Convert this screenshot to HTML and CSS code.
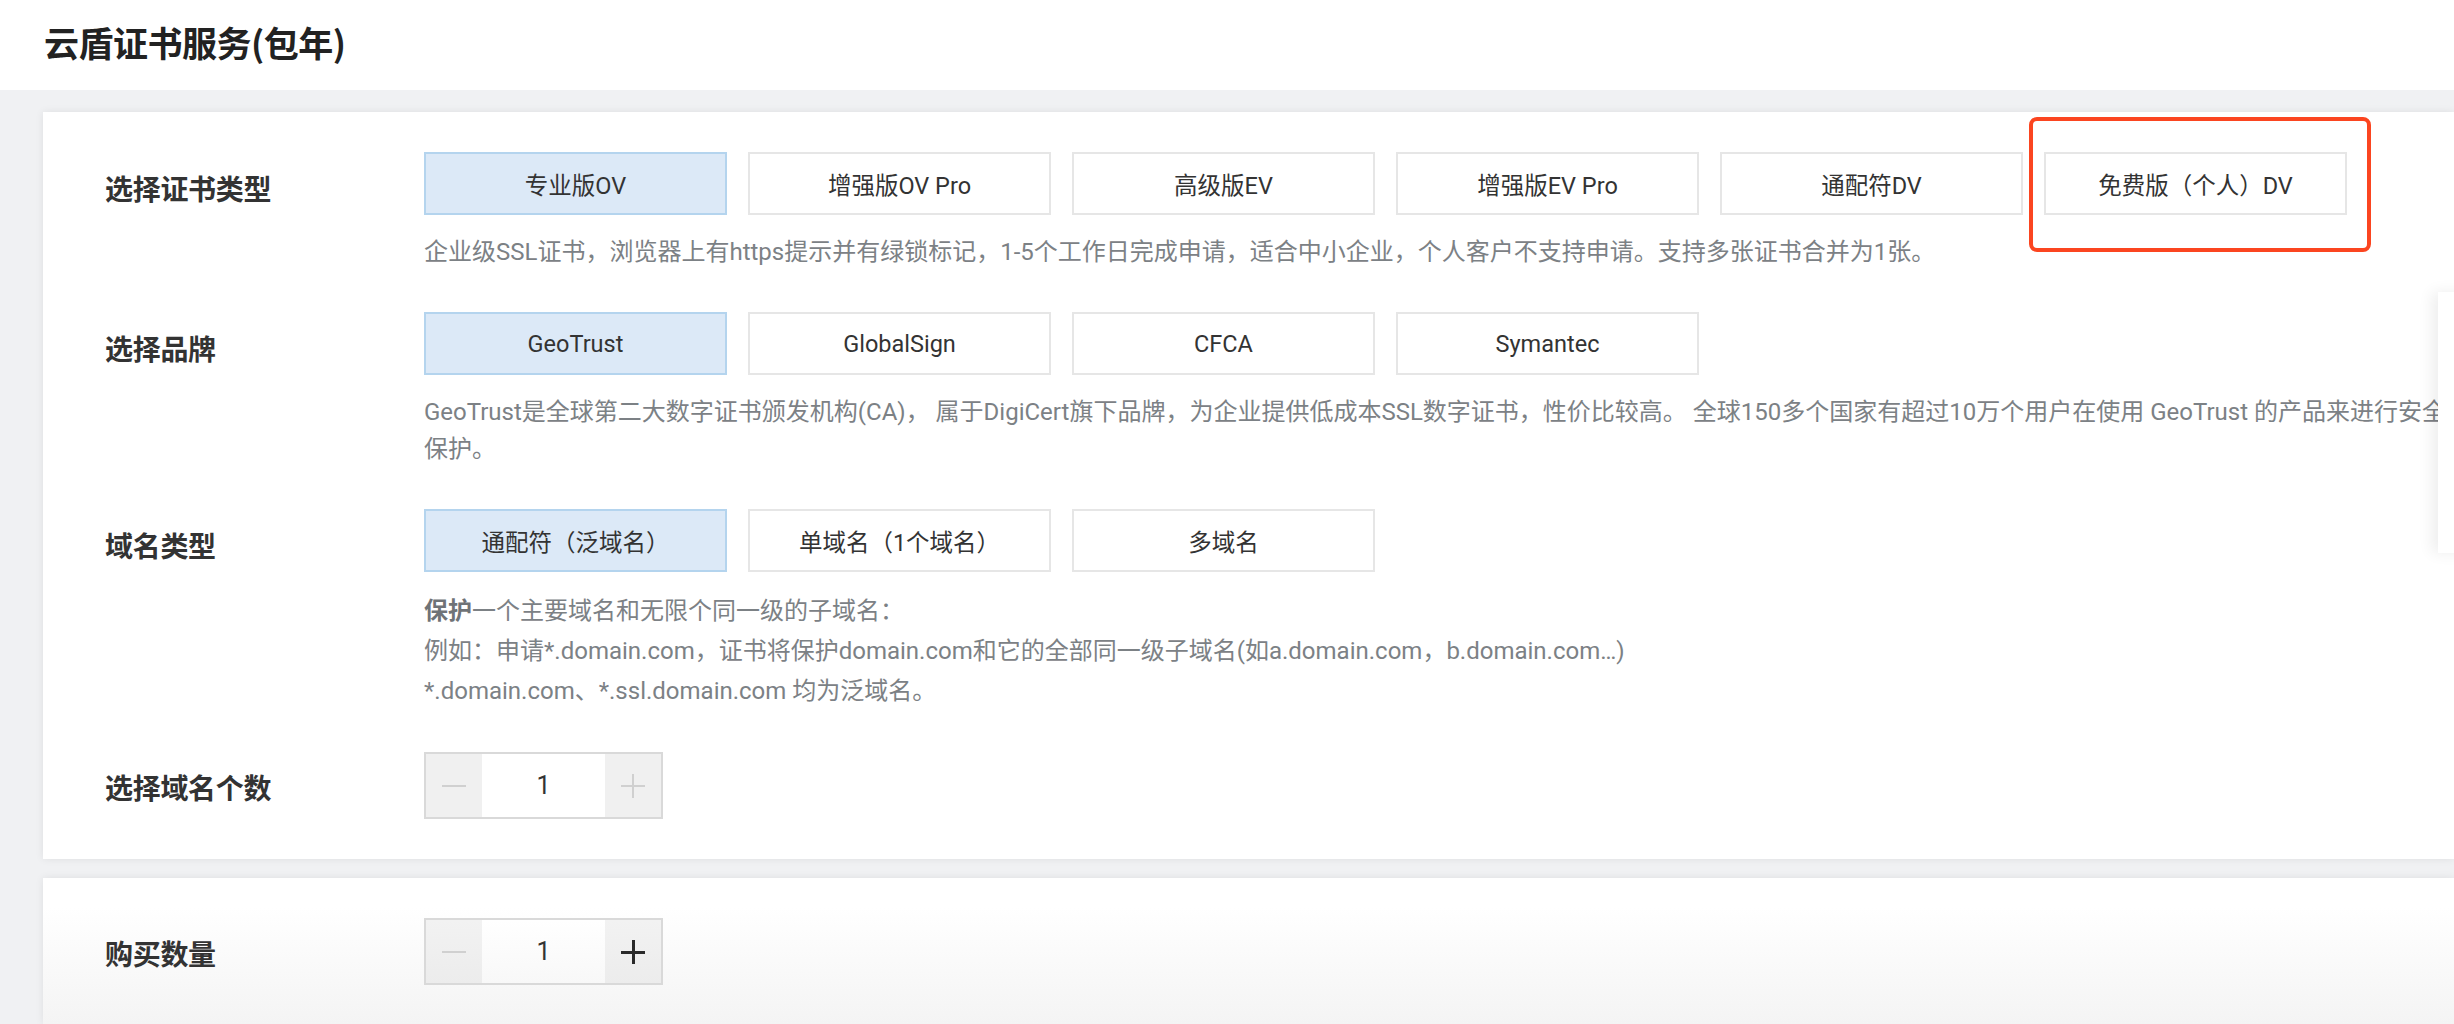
FILE: index.html
```html
<!DOCTYPE html>
<html lang="zh-CN">
<head>
<meta charset="utf-8">
<title>云盾证书服务(包年)</title>
<link rel="stylesheet" href="styles.css">
</head>
<body>
<header class="page-header">
  <h1 class="page-title">云盾证书服务(包年)</h1>
</header>
<main class="page-main">
  <section class="card card-config">
    <div class="form-row">
      <div class="form-label">选择证书类型</div>
      <div class="form-field">
        <div class="option-group">
          <div class="option selected">专业版OV</div>
          <div class="option">增强版OV Pro</div>
          <div class="option">高级版EV</div>
          <div class="option">增强版EV Pro</div>
          <div class="option">通配符DV</div>
          <div class="option">免费版（个人）DV</div>
        </div>
        <p class="desc">企业级SSL证书，浏览器上有https提示并有绿锁标记，1-5个工作日完成申请，适合中小企业，个人客户不支持申请。支持多张证书合并为1张。</p>
      </div>
    </div>
    <div class="form-row">
      <div class="form-label">选择品牌</div>
      <div class="form-field">
        <div class="option-group">
          <div class="option selected">GeoTrust</div>
          <div class="option">GlobalSign</div>
          <div class="option">CFCA</div>
          <div class="option">Symantec</div>
        </div>
        <p class="desc">GeoTrust是全球第二大数字证书颁发机构(CA)， 属于DigiCert旗下品牌，为企业提供低成本SSL数字证书，性价比较高。 全球150多个国家有超过10万个用户在使用 GeoTrust 的产品来进行安全保护。</p>
      </div>
    </div>
    <div class="form-row">
      <div class="form-label">域名类型</div>
      <div class="form-field">
        <div class="option-group">
          <div class="option selected">通配符（泛域名）</div>
          <div class="option">单域名（1个域名）</div>
          <div class="option">多域名</div>
        </div>
        <div class="desc desc-tall">
          <p><b>保护</b>一个主要域名和无限个同一级的子域名：</p>
          <p>例如：申请*.domain.com，证书将保护domain.com和它的全部同一级子域名(如a.domain.com，b.domain.com…)</p>
          <p>*.domain.com、*.ssl.domain.com 均为泛域名。</p>
        </div>
      </div>
    </div>
    <div class="form-row">
      <div class="form-label label-stepper">选择域名个数</div>
      <div class="form-field">
        <div class="stepper">
          <span class="step-btn"><span class="icon-minus"></span></span>
          <span class="step-value">1</span>
          <span class="step-btn"><span class="icon-plus"></span></span>
        </div>
      </div>
    </div>
  </section>
  <section class="card card-qty">
    <div class="form-row">
      <div class="form-label label-stepper">购买数量</div>
      <div class="form-field">
        <div class="stepper stepper-soft">
          <span class="step-btn"><span class="icon-minus"></span></span>
          <span class="step-value">1</span>
          <span class="step-btn"><span class="icon-plus active"></span></span>
        </div>
      </div>
    </div>
  </section>
</main>
<div class="side-panel"></div>
<div class="highlight-box"></div>
</body>
</html>
```
FILE: styles.css
```css
html, body {
  margin: 0;
  padding: 0;
}
body {
  width: 2454px;
  height: 1024px;
  overflow: hidden;
  position: relative;
  background: #f0f1f3;
  font-family: Roboto, "Noto Sans CJK SC", sans-serif;
  color: #333;
}
.page-header {
  height: 90px;
  background: #fff;
  display: flex;
  align-items: center;
  padding-left: 44px;
  box-sizing: border-box;
  padding-bottom: 8px;
}
.page-title {
  margin: 0;
  font-family: "Noto Sans CJK SC", sans-serif;
  font-size: 35px;
  font-weight: 700;
  color: #222;
  letter-spacing: -0.5px;
}
.page-main {
  padding: 22px 0 0 43px;
  display: flex;
  flex-direction: column;
  gap: 19px;
}
.card {
  background: #fff;
  box-shadow: 0 0 8px rgba(0, 0, 0, 0.08);
  display: flex;
  flex-direction: column;
  gap: 41px;
  padding: 40px 0 40px 62px;
}
.card-qty {
  background: linear-gradient(#fff 20%, #f4f4f4 100%);
  height: 146px;
  box-sizing: border-box;
  padding-bottom: 0;
}
.form-row {
  display: flex;
  align-items: flex-start;
}
.form-label {
  width: 319px;
  flex: none;
  height: 63px;
  line-height: 63px;
  padding-top: 5px;
  box-sizing: border-box;
  font-family: "Noto Sans CJK SC", sans-serif;
  font-size: 28px;
  font-weight: 700;
  color: #333;
  letter-spacing: -0.3px;
}
.label-stepper {
  height: 67px;
  line-height: 67px;
  padding-top: 2px;
}
.form-field {
  flex: 1;
  min-width: 0;
}
.option-group {
  display: flex;
  gap: 21px;
}
.option {
  width: 303px;
  height: 63px;
  box-sizing: border-box;
  border: 2px solid #e6e6e6;
  background: #fff;
  display: flex;
  align-items: center;
  justify-content: center;
  font-size: 23.5px;
  color: #333;
}
.option.selected {
  background: #dce9f7;
  border-color: #b4d4ee;
}
.desc {
  margin: 19px 0 0;
  width: 2034px;
  font-size: 24px;
  line-height: 37px;
  color: #7c8185;
}
.desc p {
  margin: 0;
}
.desc b {
  font-weight: 700;
  color: #6f7377;
}
.desc-tall {
  line-height: 40px;
}
.stepper {
  display: flex;
  width: 239px;
  height: 67px;
  box-sizing: border-box;
  border: 2px solid #d9d9d9;
  background: #fff;
}
.step-btn {
  width: 56px;
  flex: none;
  background: #f0f0f0;
  display: flex;
  align-items: center;
  justify-content: center;
}
.step-value {
  flex: 1;
  display: flex;
  align-items: center;
  justify-content: center;
  font-size: 25px;
  color: #333;
}
.stepper-soft {
  background: linear-gradient(#fff, #f8f8f8);
}
.stepper-soft .step-btn {
  background: linear-gradient(#f2f2f2, #ececec);
}
.icon-minus,
.icon-plus {
  position: relative;
  width: 24px;
  height: 24px;
  display: block;
}
.icon-minus::before,
.icon-plus::before,
.icon-plus::after {
  content: "";
  position: absolute;
  background: #d0d0d0;
}
.icon-minus::before,
.icon-plus::before {
  left: 0;
  right: 0;
  top: 11px;
  height: 2px;
}
.icon-plus::after {
  top: 0;
  bottom: 0;
  left: 11px;
  width: 2px;
}
.icon-plus.active::before,
.icon-plus.active::after {
  background: #2a2a2a;
}
.icon-plus.active::before {
  top: 11px;
  height: 3px;
}
.icon-plus.active::after {
  left: 11px;
  width: 3px;
}
.side-panel {
  position: absolute;
  left: 2438px;
  top: 292px;
  width: 220px;
  height: 261px;
  background: #fff;
  box-shadow: -6px 0 14px rgba(0, 0, 0, 0.07);
}
.highlight-box {
  position: absolute;
  left: 2029px;
  top: 117px;
  width: 342px;
  height: 135px;
  box-sizing: border-box;
  border: 4px solid #fb4520;
  border-radius: 8px;
}
```
